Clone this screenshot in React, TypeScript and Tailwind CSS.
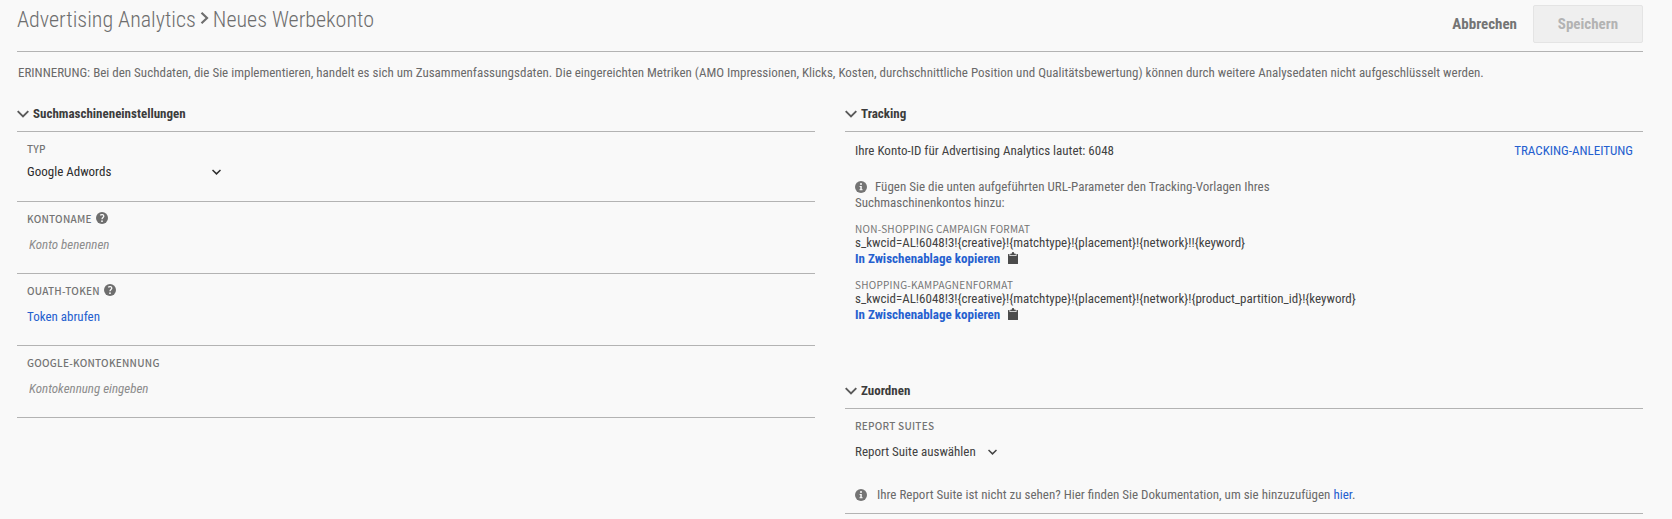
import React, { useId } from "react";

function Chevron({ className }: { className?: string }) {
  return (
    <svg className={className} viewBox="0 0 12 8" fill="none" stroke="currentColor" strokeWidth="1.9" aria-hidden="true">
      <path d="M.7 1.2 6 6.5 11.3 1.2" />
    </svg>
  );
}

function HelpIcon() {
  return (
    <svg className="mb-0.5 size-3 shrink-0 text-[#6e6e6e]" viewBox="0 0 12 12" aria-hidden="true">
      <circle cx="6" cy="6" r="6" fill="currentColor" />
      <path d="M4.2 3.3C5.4 2.2 7.9 2.4 7.8 4.2 7.7 5.4 6 5.6 6 7.2" fill="none" stroke="#f9f9f9" strokeWidth="1.3" />
      <circle cx="6" cy="9.2" r=".9" fill="#f9f9f9" />
    </svg>
  );
}

function InfoIcon({ className }: { className?: string }) {
  return (
    <svg className={className} viewBox="0 0 12 12" aria-hidden="true">
      <circle cx="6" cy="6" r="6" fill="#747474" />
      <circle cx="6" cy="3" r="1" fill="#f9f9f9" />
      <path d="M4.6 5h2.2v3.3h.8v1H4.5v-1h.8V6h-.7z" fill="#f9f9f9" />
    </svg>
  );
}

function ClipboardIcon() {
  return (
    <svg className="mb-0.5 h-3 w-[10px]" viewBox="0 0 10 12" fill="#4b4b4b" aria-hidden="true">
      <path d="M.5 2h1v2h7V2h1q.5 0 .5.5v9q0 .5-.5.5h-9Q0 12 0 11.5v-9Q0 2 .5 2z" />
      <path d="M2.2 3.3V1.7h1.4C3.8.6 4.3 0 5 0s1.2.6 1.4 1.7h1.4v1.6z" />
    </svg>
  );
}

function SectionHeading({ children }: { children: React.ReactNode }) {
  return (
    <h2 className="border-b border-[#b3b3b3] pb-[7px] font-bold text-[#3c3c3c]">
      <button type="button" className="flex items-center gap-1 leading-5">
        <Chevron className="h-2 w-3 text-[#5a5a5a]" />
        {children}
      </button>
    </h2>
  );
}

const labelClass =
  "flex items-center gap-1 font-['Noto_Sans_CJK_SC',sans-serif] text-[10px] leading-[18px] font-medium tracking-wide text-[#747474] uppercase";

function Select({ id, option, className }: { id: string; option: string; className: string }) {
  return (
    <div className={`grid items-center ${className}`}>
      <select id={id} className="col-start-1 row-start-1 w-full appearance-none bg-transparent pr-3 leading-6">
        <option>{option}</option>
      </select>
      <Chevron className="pointer-events-none col-start-1 row-start-1 h-[6px] w-[9px] justify-self-end" />
    </div>
  );
}

function TextRow({ label, placeholder, help }: { label: string; placeholder: string; help?: boolean }) {
  const id = useId();
  return (
    <div className="border-b border-[#b3b3b3] px-[10px] pt-2 pb-4">
      <label htmlFor={id} className={labelClass}>
        {label}
        {help && <HelpIcon />}
      </label>
      <input
        id={id}
        type="text"
        placeholder={placeholder}
        className="mt-[5px] block h-6 w-full bg-transparent px-[2px] leading-6 outline-none placeholder:text-[#8c8c8c] placeholder:italic"
      />
    </div>
  );
}

function Format({ label, code }: { label: string; code: string }) {
  return (
    <div>
      <h3 className="font-['Noto_Sans_CJK_SC',sans-serif] text-[10px] leading-3 tracking-wide text-[#747474] uppercase">
        {label}
      </h3>
      <p className="leading-4 break-words">{code}</p>
      <button type="button" className="flex items-center gap-2 leading-4 font-bold text-[#2560cf]">
        In Zwischenablage kopieren
        <ClipboardIcon />
      </button>
    </div>
  );
}

export default function App() {
  return (
    <main className="min-h-screen bg-[#f9f9f9] pr-[29px] pl-[17px] font-['Roboto_Condensed',Roboto,sans-serif] text-[13px] text-[#424242]">
      <header className="flex items-start justify-between border-b border-[#b3b3b3] pt-[5px] pb-2">
        <h1 className="flex items-center gap-1 text-[22px] leading-[30px] font-light text-[#6e6e6e]">
          Advertising Analytics
          <svg className="mb-1 h-3 w-[9px]" viewBox="0 0 9 12" fill="none" stroke="currentColor" strokeWidth="2.2" aria-hidden="true">
            <path d="M1.5.8 7 6 1.5 11.2" />
          </svg>
          Neues Werbekonto
        </h1>
        <div className="flex items-center gap-4 text-[15px] font-bold">
          <button type="button" className="text-[#747474]">
            Abbrechen
          </button>
          <button type="button" disabled className="h-[38px] w-[110px] rounded-xs border border-[#e4e4e4] bg-[#efefef] text-[#b3b3b3]">
            Speichern
          </button>
        </div>
      </header>

      <p className="mt-[11px] px-px leading-5 text-[#6a6a6a]">
        ERINNERUNG: Bei den Suchdaten, die Sie implementieren, handelt es sich um Zusammenfassungsdaten. Die eingereichten
        Metriken (AMO Impressionen, Klicks, Kosten, durchschnittliche Position und Qualitätsbewertung) können durch weitere
        Analysedaten nicht aufgeschlüsselt werden.
      </p>

      <div className="mt-[21px] grid grid-cols-2 items-start gap-[30px]">
        <section>
          <SectionHeading>Suchmaschineneinstellungen</SectionHeading>
          <div className="border-b border-[#b3b3b3] px-[10px] pt-2 pb-[17px] text-[#2c2c2c]">
            <label htmlFor="type" className={labelClass}>
              Typ
            </label>
            <Select id="type" option="Google Adwords" className="mt-[2px] w-[194px]" />
          </div>
          <TextRow label="Kontoname" placeholder="Konto benennen" help />
          <div className="border-b border-[#b3b3b3] px-[10px] pt-2 pb-4">
            <div className={labelClass}>
              Ouath-Token
              <HelpIcon />
            </div>
            <button type="button" className="mt-[5px] block leading-6 text-[#2560cf]">
              Token abrufen
            </button>
          </div>
          <TextRow label="Google-Kontokennung" placeholder="Kontokennung eingeben" />
        </section>

        <div>
          <section>
            <SectionHeading>Tracking</SectionHeading>
            <div className="px-[10px] pt-[9px]">
              <div className="flex justify-between leading-5">
                <p>Ihre Konto-ID für Advertising Analytics lautet: 6048</p>
                <a href="#anleitung" className="text-[#2560cf] uppercase">
                  Tracking-Anleitung
                </a>
              </div>
              <p className="mt-[18px] max-w-[500px] leading-4 text-[#6a6a6a]">
                <InfoIcon className="mr-2 mb-[2px] inline-block size-3 align-middle" />
                Fügen Sie die unten aufgeführten URL-Parameter den Tracking-Vorlagen Ihres Suchmaschinenkontos hinzu:
              </p>
              <div className="mt-3 flex flex-col gap-3">
                <Format
                  label="Non-Shopping Campaign Format"
                  code="s_kwcid=AL!6048!3!{creative}!{matchtype}!{placement}!{network}!!{keyword}"
                />
                <Format
                  label="Shopping-Kampagnenformat"
                  code="s_kwcid=AL!6048!3!{creative}!{matchtype}!{placement}!{network}!{product_partition_id}!{keyword}"
                />
              </div>
            </div>
          </section>

          <section className="mt-[58px]">
            <SectionHeading>Zuordnen</SectionHeading>
            <div className="border-b border-[#b3b3b3] px-[10px] pt-2 pb-2">
              <label htmlFor="suites" className={labelClass}>
                Report Suites
              </label>
              <Select id="suites" option="Report Suite auswählen" className="mt-[5px] w-[142px]" />
              <p className="mt-[21px] flex items-center gap-[10px] leading-5 text-[#6a6a6a]">
                <InfoIcon className="size-3 shrink-0" />
                <span>
                  Ihre Report Suite ist nicht zu sehen? Hier finden Sie Dokumentation, um sie hinzuzufügen{" "}
                  <a href="#hier" className="text-[#2560cf]">
                    hier
                  </a>
                  .
                </span>
              </p>
            </div>
          </section>
        </div>
      </div>
    </main>
  );
}
